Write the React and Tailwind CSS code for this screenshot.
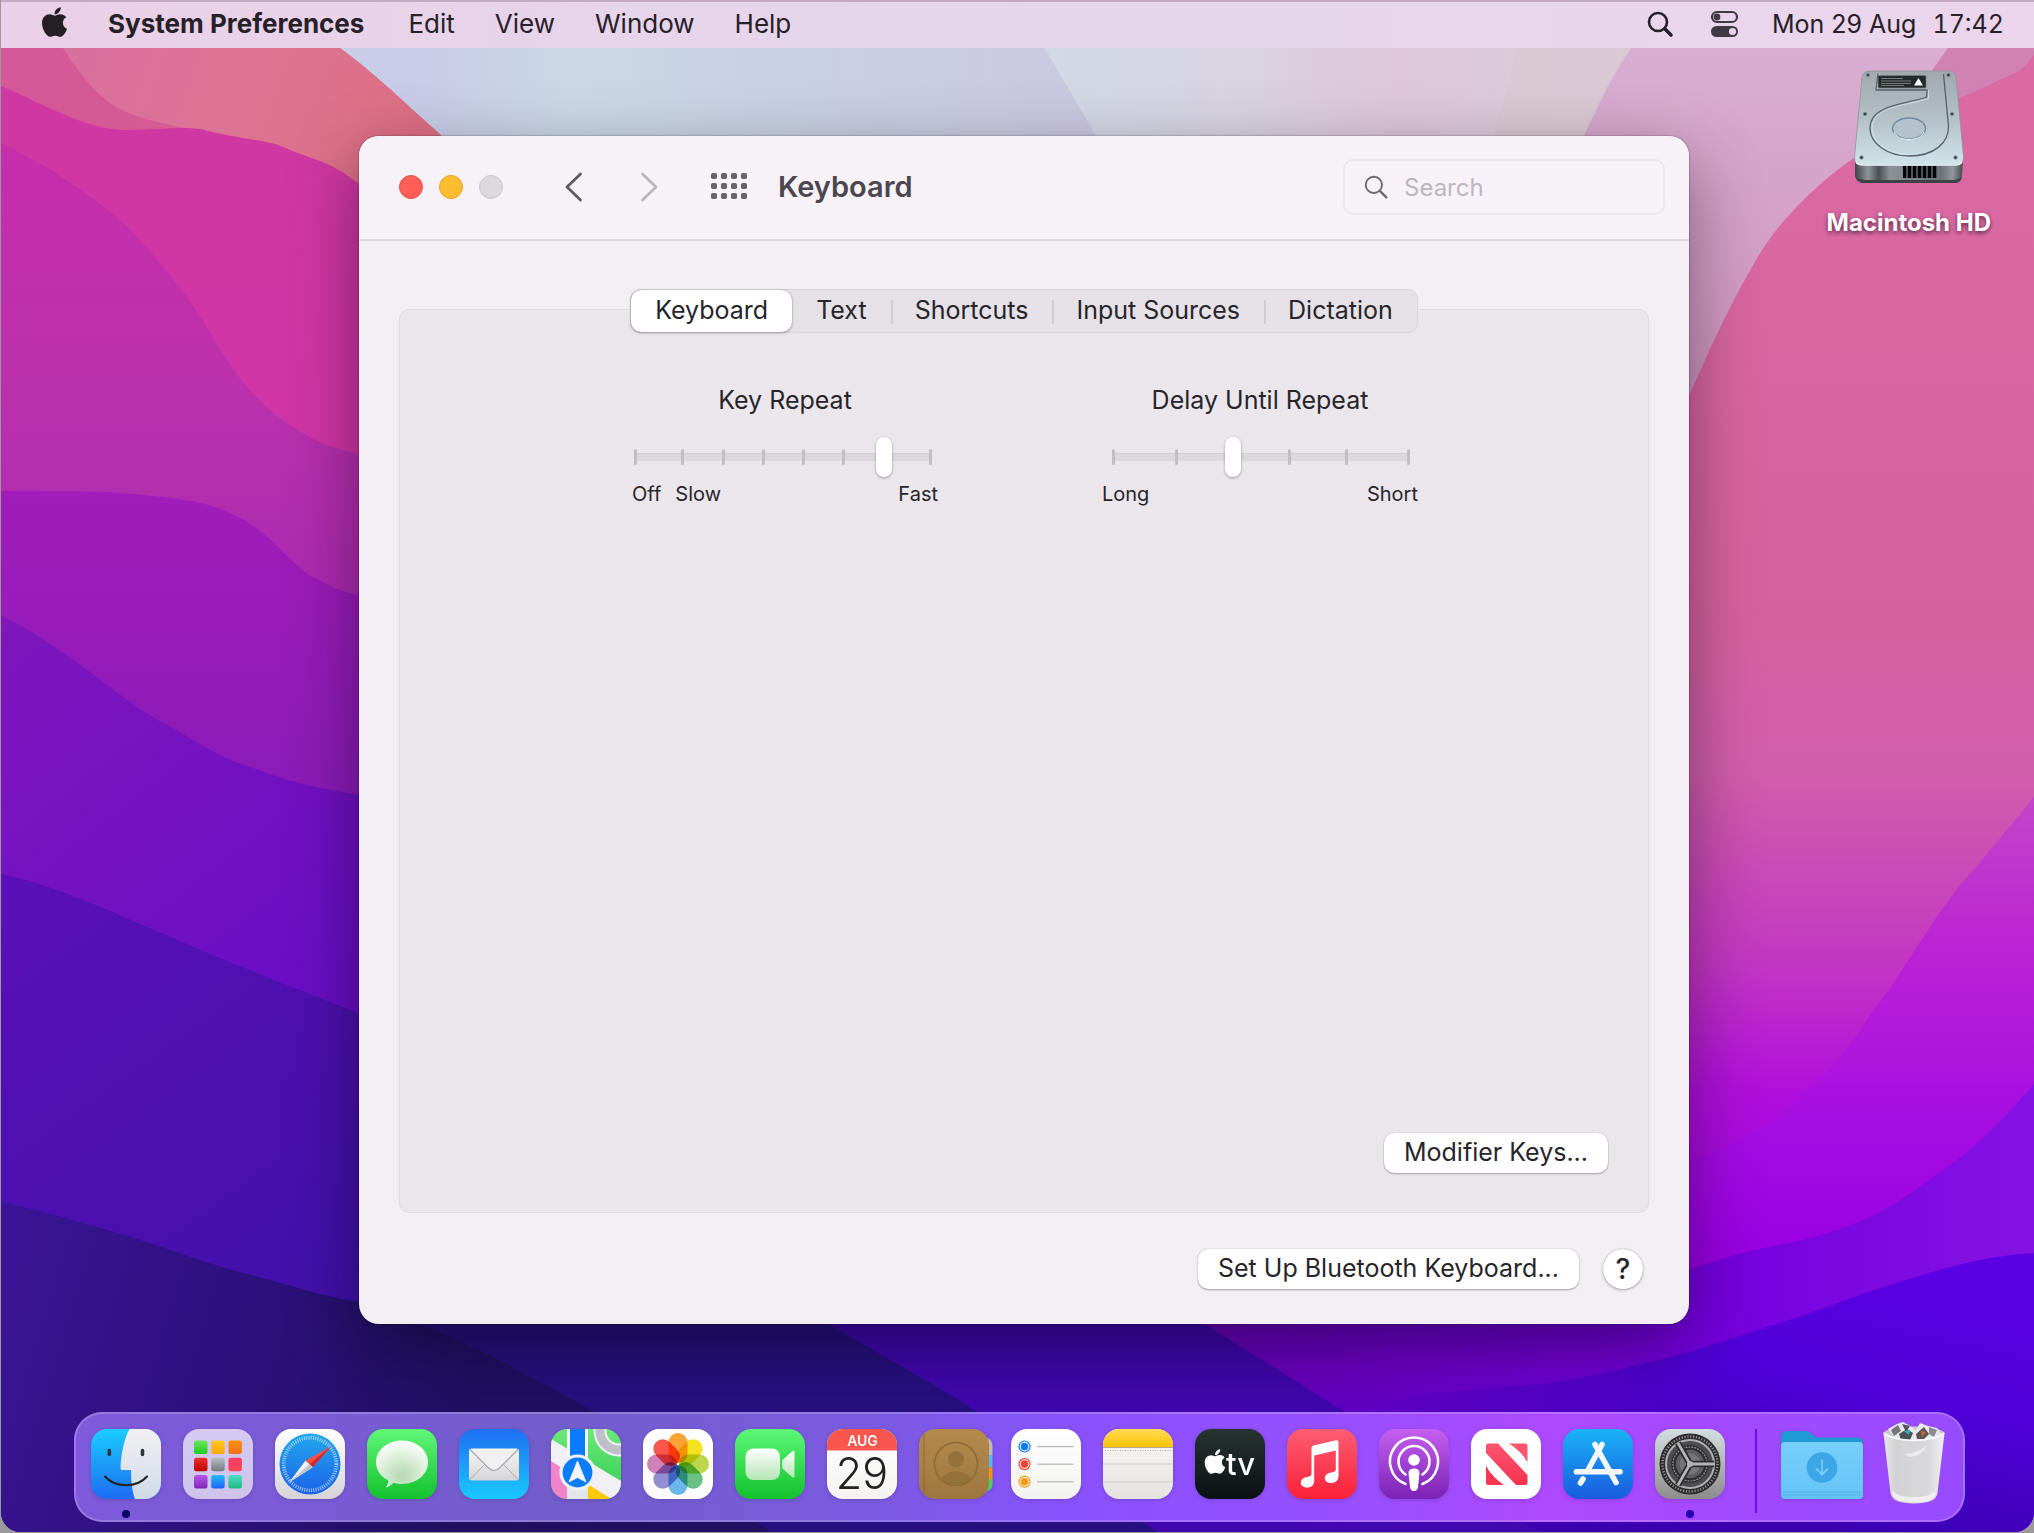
import { useState } from 'react'
import { FaApple } from 'react-icons/fa'

const TABS = ['Keyboard', 'Text', 'Shortcuts', 'Input Sources', 'Dictation']

function Gradient({ id, from, to, x2 = 0, y2 = 1 }) {
  return (
    <linearGradient id={id} x1="0" y1="0" x2={x2} y2={y2}>
      <stop offset="0" stopColor={from} />
      <stop offset="1" stopColor={to} />
    </linearGradient>
  )
}

/* ---------- Wallpaper ---------- */

function Wallpaper() {
  return (
    <svg className="absolute inset-0 h-full w-full" viewBox="0 0 2034 1533" preserveAspectRatio="none" aria-hidden="true">
      <defs>
        <linearGradient id="w-sky" x1="0" y1="0" x2="1" y2="0">
          <stop offset="0.15" stopColor="#c9cfe8" />
          <stop offset="0.2" stopColor="#c7cbe7" />
          <stop offset="0.28" stopColor="#ccd8e8" />
          <stop offset="0.4" stopColor="#c8d0e4" />
          <stop offset="0.52" stopColor="#cbc8e2" />
        </linearGradient>
        <linearGradient id="w-haze" x1="1040" y1="0" x2="1640" y2="0" gradientUnits="userSpaceOnUse">
          <stop offset="0" stopColor="#d2d9e6" />
          <stop offset="0.35" stopColor="#d9d3e1" />
          <stop offset="0.6" stopColor="#dfc6da" />
          <stop offset="0.75" stopColor="#dccada" />
          <stop offset="1" stopColor="#dccfdc" />
        </linearGradient>
        <Gradient id="w-lilac" from="#d9aed2" to="#cf93c0" />
        <Gradient id="w-coral" from="#d4579a" to="#e0657f" x2={1} y2={0} />
        <linearGradient id="w-peach" x1="60" y1="48" x2="400" y2="170" gradientUnits="userSpaceOnUse">
          <stop offset="0" stopColor="#d8709f" />
          <stop offset="0.5" stopColor="#dc7494" />
          <stop offset="1" stopColor="#dd6f84" />
        </linearGradient>
        <linearGradient id="w-l2" x1="0" y1="86" x2="0" y2="460" gradientUnits="userSpaceOnUse">
          <stop offset="0" stopColor="#cf38a2" />
          <stop offset="1" stopColor="#d135a8" />
        </linearGradient>
        <linearGradient id="w-l3" x1="0" y1="143" x2="0" y2="600" gradientUnits="userSpaceOnUse">
          <stop offset="0" stopColor="#c72eab" />
          <stop offset="0.55" stopColor="#bb31ad" />
          <stop offset="1" stopColor="#ab2ab2" />
        </linearGradient>
        <linearGradient id="w-l4" x1="0" y1="490" x2="0" y2="800" gradientUnits="userSpaceOnUse">
          <stop offset="0" stopColor="#a11cbb" />
          <stop offset="1" stopColor="#8a1bb8" />
        </linearGradient>
        <linearGradient id="w-l5" x1="0" y1="616" x2="300" y2="1000" gradientUnits="userSpaceOnUse">
          <stop offset="0" stopColor="#7f16bd" />
          <stop offset="1" stopColor="#690ec6" />
        </linearGradient>
        <linearGradient id="w-l6" x1="0" y1="880" x2="300" y2="1300" gradientUnits="userSpaceOnUse">
          <stop offset="0" stopColor="#5a10b8" />
          <stop offset="1" stopColor="#4210aa" />
        </linearGradient>
        <linearGradient id="w-l7" x1="0" y1="1250" x2="480" y2="1400" gradientUnits="userSpaceOnUse">
          <stop offset="0" stopColor="#3b1496" />
          <stop offset="0.45" stopColor="#2e117f" />
          <stop offset="1" stopColor="#1f1062" />
        </linearGradient>
        <linearGradient id="w-rose" x1="0" y1="50" x2="0" y2="1260" gradientUnits="userSpaceOnUse">
          <stop offset="0" stopColor="#da6aa4" />
          <stop offset="0.45" stopColor="#d6629f" />
          <stop offset="0.6" stopColor="#d15eab" />
          <stop offset="0.76" stopColor="#c335c4" />
          <stop offset="0.86" stopColor="#b010dc" />
          <stop offset="1" stopColor="#9a00e2" />
        </linearGradient>
        <linearGradient id="w-magenta" x1="0" y1="797" x2="0" y2="1260" gradientUnits="userSpaceOnUse">
          <stop offset="0" stopColor="#c545c8" />
          <stop offset="0.3" stopColor="#bc26d3" />
          <stop offset="0.65" stopColor="#a910e1" />
          <stop offset="1" stopColor="#9800e4" />
        </linearGradient>
        <linearGradient id="w-violet" x1="1200" y1="0" x2="2034" y2="0" gradientUnits="userSpaceOnUse">
          <stop offset="0" stopColor="#6800bc" />
          <stop offset="0.6" stopColor="#7400df" />
          <stop offset="1" stopColor="#8512e4" />
        </linearGradient>
        <linearGradient id="w-floor" x1="0" y1="1370" x2="0" y2="1533" gradientUnits="userSpaceOnUse">
          <stop offset="0" stopColor="#3a00b0" stopOpacity="0" />
          <stop offset="1" stopColor="#3a00b0" />
        </linearGradient>
        <linearGradient id="w-indigo" x1="1900" y1="1260" x2="1840" y2="1533" gradientUnits="userSpaceOnUse">
          <stop offset="0" stopColor="#5c00e4" />
          <stop offset="0.5" stopColor="#4e00d6" />
          <stop offset="1" stopColor="#3a00b0" />
        </linearGradient>
        <linearGradient id="w-fade" x1="1380" y1="0" x2="1700" y2="0" gradientUnits="userSpaceOnUse">
          <stop offset="0" stopColor="#fff" stopOpacity="0" />
          <stop offset="1" stopColor="#fff" />
        </linearGradient>
        <mask id="w-fade-mask" maskUnits="userSpaceOnUse" x="0" y="0" width="2034" height="1533">
          <rect width="2034" height="1533" fill="url(#w-fade)" />
        </mask>
      </defs>
      <rect width="2034" height="1533" fill="url(#w-sky)" />
      <path d="M1044 48C1060 75 1075 100 1095 135L1200 300H1700V48Z" fill="url(#w-haze)" />
      <path d="M1517 48C1512 75 1503 100 1493 135L1450 200H1700V48Z" fill="#d9c6cf" opacity=".6" />
      <path d="M1631 48C1612 75 1598 105 1585 133L1500 400H1800L2034 200V48Z" fill="url(#w-lilac)" />
      <path d="M1948 48L1900 115L1855 157L2034 120V48Z" fill="#d182b4" />
      <path d="M2034 55C2028 62 2024 68 2017 72C1998 81 1980 89 1962 97C1920 112 1885 132 1855 157C1830 175 1812 190 1793 211C1765 240 1755 262 1738 292C1718 330 1705 360 1689 396L1500 900V1400H2034Z" fill="url(#w-rose)" />
      <path d="M2034 797C2010 828 1985 856 1960 886C1925 930 1905 970 1875 1009C1856 1035 1845 1056 1824 1076C1795 1105 1770 1125 1738 1142L1650 1180V1320H2034Z" fill="url(#w-magenta)" />
      <path d="M2034 1085C2004 1118 1975 1150 1943 1171C1915 1190 1888 1212 1858 1223C1830 1234 1800 1242 1772 1247C1745 1252 1720 1260 1689 1270L1100 1290V1533H2034Z" fill="url(#w-violet)" />
      <rect x="1100" y="1370" width="934" height="163" fill="url(#w-floor)" />
      <path d="M2034 1254C1985 1256 1940 1270 1892 1285C1850 1298 1812 1315 1772 1326C1730 1340 1685 1355 1636 1366C1590 1378 1550 1386 1500 1388L1380 1400V1533H2034Z" fill="url(#w-indigo)" mask="url(#w-fade-mask)" />

      <path d="M0 48H339C370 70 405 104 440 135L600 400H0Z" fill="url(#w-coral)" />
      <path d="M62 48C80 75 98 100 125 112C150 122 180 128 207 131C235 140 280 140 310 160C330 166 345 175 360 185L400 240L440 135C405 104 370 70 339 48Z" fill="url(#w-peach)" />
      <path d="M0 86C45 105 85 130 125 130C160 130 190 125 207 131C235 138 262 140 280 146C310 160 330 160 359 185L700 400V700H0Z" fill="url(#w-l2)" />
      <path d="M0 143C45 165 85 190 123 224C145 245 163 268 183 293C200 315 215 345 233 370C252 397 275 418 300 432C320 445 340 450 359 455L700 700V800H0Z" fill="url(#w-l3)" />
      <path d="M0 491C50 492 100 490 150 496C180 499 207 502 233 515C252 523 268 538 283 553C295 565 305 575 320 581C333 589 345 594 359 595L900 900H0Z" fill="url(#w-l4)" />
      <path d="M0 616C30 630 55 648 83 668C113 690 140 713 173 729C200 746 228 762 257 770C290 783 325 791 359 795L900 1100H0Z" fill="url(#w-l5)" />
      <path d="M0 875C35 882 65 894 100 908C140 925 178 942 217 958C265 978 310 995 359 1015L1206 1326L1343 1412L1540 1533H0Z" fill="#4007ae" />
      <path d="M0 875C35 882 65 894 100 908C140 925 178 942 217 958C265 978 310 995 359 1015L600 1100V1324H0Z" fill="url(#w-l6)" />
      <path d="M0 1203C45 1213 90 1226 133 1239C178 1253 220 1270 267 1280C298 1290 328 1298 359 1303L600 1290L830 1326L957 1400L1157 1533H0Z" fill="#26107f" />
      <path d="M0 1203C45 1213 90 1226 133 1239C178 1253 220 1270 267 1280C298 1290 328 1298 359 1303L440 1333L500 1362L593 1412L770 1533H0Z" fill="url(#w-l7)" />
    </svg>
  )
}

/* ---------- Menu bar ---------- */

function MenuBar() {
  return (
    <header className="relative flex h-12 items-center border-t-2 border-[#c3a9c4] bg-linear-to-r from-[#ebd0e7] via-[#e4d7ec] to-[#ecd5ec] pr-[30px] pb-0.5 pl-10 leading-none whitespace-nowrap text-[#262128]">
      <nav className="flex items-center gap-10 text-[26px]">
        <button type="button" aria-label="Apple menu">
          <FaApple size={34} className="-mt-1 w-[27px] text-[#231f25]" />
        </button>
        <button type="button" className="pr-1 font-bold">System Preferences</button>
        <button type="button">Edit</button>
        <button type="button">View</button>
        <button type="button">Window</button>
        <button type="button">Help</button>
      </nav>
      <div className="ml-auto flex items-center text-[25px]">
        <button type="button" aria-label="Spotlight" className="mr-9">
          <svg width="27" height="27" viewBox="0 0 27 27" fill="none" stroke="#262128" strokeLinecap="round">
            <circle cx="11" cy="11" r="9" strokeWidth="2.6" />
            <path d="M18 18l6 6" strokeWidth="3.6" />
          </svg>
        </button>
        <button type="button" aria-label="Control Centre" className="mr-8">
          <svg width="30" height="28" viewBox="0 0 30 28">
            <rect x="2" y="2" width="25" height="10" rx="5" fill="none" stroke="#3f3942" strokeWidth="2.2" />
            <circle cx="7" cy="7" r="3.4" fill="#3f3942" />
            <rect x="1" y="16" width="27" height="11" rx="5.5" fill="#3f3942" />
            <circle cx="22.500" cy="21.500" r="3.600" fill="#ead5ec" />
          </svg>
        </button>
        <time className="flex gap-4">
          <span>Mon 29 Aug</span>
          <span className="tabular-nums">17:42</span>
        </time>
      </div>
    </header>
  )
}

/* ---------- Desktop drive ---------- */

function DriveIcon() {
  const screws = [[14, 5], [94.500, 5], [11, 44], [98, 44], [7.500, 87.500], [101.500, 87.500]]
  return (
    <svg width="110" height="114" viewBox="0 0 110 114" aria-hidden="true">
      <defs>
        <linearGradient id="hd-top" x1="0" y1="0" x2="0" y2="1">
          <stop offset="0" stopColor="#a1a9ac" />
          <stop offset="0.5" stopColor="#b3c0c6" />
          <stop offset="1" stopColor="#cfe4ea" />
        </linearGradient>
        <linearGradient id="hd-base" x1="0" y1="0" x2="1" y2="0">
          <stop offset="0" stopColor="#3e4448" />
          <stop offset="0.12" stopColor="#8d9598" />
          <stop offset="0.22" stopColor="#4a5053" />
          <stop offset="0.32" stopColor="#8b9396" />
          <stop offset="0.8" stopColor="#6a7275" />
          <stop offset="0.9" stopColor="#90989b" />
          <stop offset="1" stopColor="#454b4f" />
        </linearGradient>
      </defs>
      <path d="M1 90H109L108 106Q107 113 100 113H10Q2 113 1 106Z" fill="url(#hd-base)" />
      <path d="M2 107Q4 113 10 113H100Q107 113 108 107Q104 110 98 110H12Q6 110 2 107Z" fill="#3b4145" />
      <path d="M48.500 96H83V108H50Z" fill="#4a4f50" />
      {[49, 54, 59, 64, 69, 74, 79].map((x) => (
        <rect key={x} x={x} y="96" width="3" height="12" fill="#050607" />
      ))}
      <path d="M15 1H95Q101 1 102 8L109.500 87Q110 95 101 95H8Q0 95 .500 87L8 8Q9 1 15 1Z" fill="url(#hd-top)" stroke="#8d979b" strokeWidth=".8" />
      <path d="M2 92Q4 95 9 95H101Q106 95 108 92" fill="none" stroke="#e7f1f3" strokeWidth="1.400" />
      <path d="M24 3.500L22 20H73L72.500 27C55 34 16 34 16 58C16 74 34 86 55 86C80 86 95 73 94.500 56L89.500 4" fill="none" stroke="#56606a" strokeWidth="1.300" />
      <path d="M25.500 3.500L23.500 18.500M74.500 20V28.500C56 35 18 36 18 58C18 73 35 84.500 55 84.500" fill="none" stroke="#dfe9ee" strokeWidth=".7" />
      <rect x="24" y="5.500" width="48" height="12.500" rx="1" fill="#26292b" stroke="#767c7f" strokeWidth=".8" />
      <path d="M27 8.500H49M27 11H57M27 13.500H57M27 15.500H50" stroke="#8a8f90" strokeWidth=".8" />
      <path d="M64.500 8L69 15.500H60Z" fill="#fff" />
      <ellipse cx="55" cy="58.500" rx="16.500" ry="10.500" fill="#b4c3cb" stroke="#6f8aa0" strokeWidth="1.400" />
      <path d="M40 62C43 72 67 72 70 62" fill="none" stroke="#eef7fa" strokeWidth="1" />
      {screws.map(([cx, cy]) => (
        <circle key={`${cx}-${cy}`} cx={cx} cy={cy} r="1.800" fill="#394147" stroke="#8797a0" strokeWidth=".8" />
      ))}
    </svg>
  )
}

/* ---------- Preferences window ---------- */

function RepeatSlider({ id, title, steps, value, onChange, labels, trackClass }) {
  const last = steps - 1
  return (
    <div className="flex flex-col">
      <label htmlFor={id} className="text-center text-[25px] leading-8">{title}</label>
      <div className={`relative mt-[21px] h-10 w-[298px] ${trackClass}`}>
        <div className="absolute inset-x-0 top-4 h-2 border-t border-[#d2cdd3] bg-[#dcd7dd]" />
        {Array.from({ length: steps }, (_, i) => (
          <span
            key={i}
            className="absolute top-3 h-4 w-[3px] rounded-full bg-[#c2bdc3]"
            style={{
              left: i === 0 ? 0 : i === last ? 'calc(100% - 3px)' : `calc(7px + (100% - 16px) * ${i / last})`,
            }}
          />
        ))}
        <input
          id={id}
          type="range"
          min="0"
          max={last}
          value={value}
          onChange={(e) => onChange(Number(e.target.value))}
          className="relative block h-10 w-full appearance-none bg-transparent
                     [&::-webkit-slider-thumb]:h-10 [&::-webkit-slider-thumb]:w-4
                     [&::-webkit-slider-thumb]:appearance-none [&::-webkit-slider-thumb]:rounded-full
                     [&::-webkit-slider-thumb]:bg-white
                     [&::-webkit-slider-thumb]:shadow-[0_1px_3px_rgba(0,0,0,0.35)]"
        />
      </div>
      <div className="mt-px flex gap-3.5 text-[20px] leading-8">
        {labels.map((text) => (
          <span key={text} className="last:ml-auto">{text}</span>
        ))}
      </div>
    </div>
  )
}

function PushButton({ children }) {
  return (
    <button type="button" className="h-10 rounded-[10px] bg-white px-5 pb-0.5 text-[25px] leading-none shadow-[0_0_1px_rgba(0,0,0,0.3),0_1px_2px_rgba(0,0,0,0.3)]">
      {children}
    </button>
  )
}

function PreferencesWindow() {
  const [tab, setTab] = useState('Keyboard')
  const [repeat, setRepeat] = useState(6)
  const [delay, setDelay] = useState(2)

  return (
    <section className="mr-[345px] ml-[358px] flex flex-1 flex-col overflow-hidden rounded-[20px] bg-[#f3eef4] text-[#27252a] shadow-[0_0_2px_rgba(0,0,0,0.5),0_24px_70px_rgba(0,0,0,0.42)]">
      <div className="flex h-[105px] items-center border-b-2 border-[#dcd7de] bg-[#f7f2f8] pr-6 pb-0.5 pl-10">
        <div className="flex gap-4">
          <button type="button" aria-label="Close" className="size-6 rounded-full border border-[#e5504a] bg-[#ff5f57]" />
          <button type="button" aria-label="Minimise" className="size-6 rounded-full border border-[#e3a52a] bg-[#febc2e]" />
          <button type="button" aria-label="Zoom" disabled className="size-6 rounded-full border border-[#c9c5cb] bg-[#dcd8dd]" />
        </div>
        <button type="button" aria-label="Back" className="ml-[62px]">
          <svg width="18" height="30" viewBox="0 0 18 30" fill="none" stroke="#5f5a62" strokeWidth="2.8" strokeLinecap="round" strokeLinejoin="round">
            <path d="M15.500 2L2 15l13.500 13" />
          </svg>
        </button>
        <button type="button" aria-label="Forward" className="ml-[57px]">
          <svg width="18" height="30" viewBox="0 0 18 30" fill="none" stroke="#bbb6bd" strokeWidth="2.8" strokeLinecap="round" strokeLinejoin="round">
            <path d="M2.500 2L16 15L2.500 28" />
          </svg>
        </button>
        <button type="button" aria-label="Show all" className="ml-[53px]">
          <svg width="36" height="27" viewBox="0 0 36 27" fill="#68636b">
            {[0, 10, 20, 30].map((x) => [0, 10, 20].map((y) => (
              <rect key={`${x}-${y}`} x={x} y={y} width="6" height="6" rx="1.800" />
            )))}
          </svg>
        </button>
        <h1 className="ml-[31px] text-[29px] leading-none font-semibold text-[#4b474e]">Keyboard</h1>
        <label className="ml-auto flex h-14 w-[322px] items-center gap-4 rounded-[10px] border-2 border-[#ebe6ec] px-[19px]">
          <svg width="28" height="28" viewBox="0 0 28 28" fill="none" stroke="#6c676e" strokeLinecap="round">
            <circle cx="11.500" cy="11.500" r="9.500" strokeWidth="2.2" />
            <path d="M19 19l7 7" strokeWidth="2.8" />
          </svg>
          <input
            type="search"
            aria-label="Search"
            placeholder="Search"
            className="w-full min-w-0 bg-transparent pt-0.5 text-[24px] leading-8 outline-none placeholder:text-[#bcb7bd]"
          />
        </label>
      </div>

      <div className="flex flex-1 flex-col px-10 pt-12">
        <div role="tablist" className="relative z-10 flex h-11 self-center rounded-[10px] border border-[#dad6db] bg-[#e5e1e6]">
          {TABS.map((name, i) => (
            <button
              key={name}
              type="button"
              role="tab"
              aria-selected={tab === name}
              onClick={() => setTab(name)}
              className={`relative px-6 pb-0.5 text-[25px] leading-none ${
                tab === name ? 'rounded-[10px] bg-white shadow-[0_0_1px_rgba(0,0,0,0.4),0_1px_3px_rgba(0,0,0,0.3)]' : ''
              }`}
            >
              {name}
              {i > 1 && <span className="absolute top-2.5 left-0 h-6 w-0.5 bg-[#d0ccd1]" />}
            </button>
          ))}
        </div>

        <div className="-mt-6 flex flex-1 flex-col rounded-[10px] border border-[#e0dbe1] bg-[#ebe6ec] px-10 pt-[74px] pb-[39px]">
          <div className="flex justify-center gap-[164px] pl-0.5">
            <RepeatSlider
              id="key-repeat"
              title="Key Repeat"
              steps={8}
              value={repeat}
              onChange={setRepeat}
              labels={['Off', 'Slow', 'Fast']}
              trackClass="mr-1.5 ml-0.5"
            />
            <RepeatSlider
              id="delay-until-repeat"
              title="Delay Until Repeat"
              steps={6}
              value={delay}
              onChange={setDelay}
              labels={['Long', 'Short']}
              trackClass="mr-2 ml-2.5"
            />
          </div>
          <div className="mt-auto flex justify-end">
            <PushButton>Modifier Keys...</PushButton>
          </div>
        </div>

        <div className="mt-9 mb-[35px] flex items-center justify-end gap-6 pr-1.5">
          <PushButton>Set Up Bluetooth Keyboard...</PushButton>
          <button
            type="button"
            aria-label="Help"
            className="size-10 rounded-full bg-white text-[28px] leading-none font-medium shadow-[0_0_1px_rgba(0,0,0,0.3),0_1px_3px_rgba(0,0,0,0.3)]"
          >
            ?
          </button>
        </div>
      </div>
    </section>
  )
}

/* ---------- Dock icons ---------- */

function Tile({ id, from, to, children }) {
  return (
    <svg width="70" height="70" viewBox="0 0 70 70" className="overflow-visible drop-shadow-sm" aria-hidden="true">
      <defs>
        <Gradient id={`${id}-bg`} from={from} to={to} />
        <clipPath id={`${id}-clip`}><rect width="70" height="70" rx="16" /></clipPath>
      </defs>
      <g clipPath={`url(#${id}-clip)`}>
        <rect width="70" height="70" fill={`url(#${id}-bg)`} />
        {children}
      </g>
    </svg>
  )
}

function Finder() {
  return (
    <Tile id="finder" from="#1accff" to="#1d6df2">
      <defs><Gradient id="finder-face" from="#f2f0f3" to="#cfdbe6" /></defs>
      <path d="M38.500 0C33 10 30 25 29.500 39Q29.500 41 31 41H40C40 52 41 62 44 70H70V0Z" fill="url(#finder-face)" />
      <path d="M18.300 21.500V25.500M51.500 21.500V25.500" stroke="#2a3440" strokeWidth="3.600" strokeLinecap="round" />
      <path d="M14 47.500C24 59 46 59 56 47.500" fill="none" stroke="#222" strokeWidth="2" strokeLinecap="round" />
    </Tile>
  )
}

const LAUNCHPAD = [
  ['#6ce45a', '#1fcc22'], ['#fdc92c', '#fea500'], ['#fb9210', '#f0701c'],
  ['#f5302c', '#b90404'], ['#b4bfc4', '#76797c'], ['#fe3c62', '#fb4659'],
  ['#b856ea', '#8126b8'], ['#22bcfb', '#1f62f5'], ['#4fdcc8', '#1fba80'],
]

function Launchpad() {
  return (
    <Tile id="launchpad" from="#d5caf1" to="#cec4ea">
      {LAUNCHPAD.map(([from, to], i) => (
        <g key={from}>
          <defs><Gradient id={`lp-${i}`} from={from} to={to} /></defs>
          <rect x={11 + (i % 3) * 17.2} y={11.500 + Math.floor(i / 3) * 17.2} width="13.500" height="13.500" rx="2.500" fill={`url(#lp-${i})`} />
        </g>
      ))}
    </Tile>
  )
}

function Safari() {
  return (
    <Tile id="safari" from="#ffffff" to="#d6d4d8">
      <defs><Gradient id="safari-dial" from="#22a8ec" to="#1c62ea" /></defs>
      <circle cx="35" cy="35" r="30.500" fill="url(#safari-dial)" />
      <circle cx="35" cy="35" r="26.300" fill="none" stroke="#d8eefc" strokeWidth="3.600" strokeDasharray=".9 1.395" opacity=".8" />
      <path d="M14 53.500L30.500 31.500L38 38Z" fill="#f1f1f4" />
      <path d="M14 53.500L34.500 35L38 38Z" fill="#c2c6cf" />
      <path d="M56.500 17L30.500 31.500L38 38Z" fill="#fb5148" />
      <path d="M56.500 17L34.500 35L38 38Z" fill="#cf2c31" />
    </Tile>
  )
}

function Messages() {
  return (
    <Tile id="messages" from="#60f777" to="#12c22d">
      <defs>
        <radialGradient id="bubble" cx=".5" cy=".75" r=".75">
          <stop offset="0" stopColor="#b4d8ae" />
          <stop offset="0.55" stopColor="#dcefd9" />
          <stop offset="1" stopColor="#ffffff" />
        </radialGradient>
      </defs>
      <path d="M35 11.500C49.500 11.500 61 21 61 33.300S49.500 55 35 55C32 55 29.200 54.500 26.500 53.700C24.500 56 21.500 58 18.500 58.500C20.500 56 21.500 53.500 21.200 51.200C13.800 47.500 9 41 9 33.300C9 21 20.500 11.500 35 11.500Z" fill="url(#bubble)" />
    </Tile>
  )
}

function Mail() {
  return (
    <Tile id="mail" from="#1e6ff3" to="#1ac9fd">
      <defs><Gradient id="envelope" from="#f6f6f7" to="#d5d5d7" /></defs>
      <rect x="10" y="19.500" width="50" height="32" rx="3" fill="url(#envelope)" />
      <path d="M11 50.500L25.500 35.500M59 50.500L44.500 35.500" stroke="#aaaaae" strokeWidth="1" />
      <path d="M11 20.500L29 38.500Q35 44.500 41 38.500L59 20.500" fill="#f0f0f1" stroke="#a8a8ac" strokeWidth="1.200" />
    </Tile>
  )
}

function Maps() {
  return (
    <Tile id="maps" from="#6de87b" to="#2fcc50">
      <circle cx="68" cy="2" r="19" fill="none" stroke="#f0f0f4" strokeWidth="13" />
      <circle cx="68" cy="2" r="19" fill="none" stroke="#bfbfca" strokeWidth="9" />
      <path d="M0 31V70H16V40Z" fill="#f083c9" />
      <path d="M37 52V70H62Z" fill="#fdc90a" />
      <path d="M0 10L70 52V76L0 32Z" fill="#f1f1f5" />
      <path d="M16 38H37V70H16Z" fill="#e4e4ec" />
      <path d="M16 0H37V42H16Z" fill="#f3f6fb" />
      <path d="M19 0H34V42H19Z" fill="#0a7bfc" />
      <circle cx="26.500" cy="43.500" r="16.500" fill="#0b7cfb" stroke="#f0f0f4" strokeWidth="3.200" />
      <path d="M26.500 32L35 53L26.500 48.500L18 53Z" fill="#f5f5f8" strokeLinejoin="round" stroke="#f5f5f8" strokeWidth=".8" />
    </Tile>
  )
}

const PETALS = ['#fd9d20', '#f5e208', '#b7d63e', '#5dbf7d', '#5eb2ec', '#8d85cf', '#d077b4', '#fb4a3c']

function Photos() {
  return (
    <Tile id="photos" from="#ffffff" to="#fbfbfc">
      {PETALS.map((fill, i) => (
        <rect key={fill} x="25.500" y="4" width="19" height="30" rx="9.500" fill={fill} opacity=".92" className="mix-blend-multiply" transform={`rotate(${i * 45} 35 35)`} />
      ))}
    </Tile>
  )
}

function FaceTime() {
  return (
    <Tile id="facetime" from="#5cf777" to="#12c22d">
      <defs><Gradient id="camera" from="#ffffff" to="#b4e5b4" /></defs>
      <rect x="10.500" y="19.500" width="34.500" height="31.500" rx="8" fill="url(#camera)" />
      <path d="M47.500 31L57 22.500Q59.500 20.500 59.500 23.500V47Q59.500 50 57 48L47.500 39.500Q46.500 35 47.500 31Z" fill="url(#camera)" />
    </Tile>
  )
}

function Calendar() {
  return (
    <Tile id="calendar" from="#ffffff" to="#f4f3f2">
      <path d="M0 0H70V21.500H0Z" fill="#f9564e" />
      <text x="35.500" y="17" textAnchor="middle" fontSize="14" fontWeight="600" fill="#fff">AUG</text>
      <text x="35" y="59.500" textAnchor="middle" fontSize="43" fontWeight="300" fill="#222">29</text>
    </Tile>
  )
}

function Contacts() {
  return (
    <svg width="74" height="70" viewBox="0 0 74 70" className="-mr-1 drop-shadow-sm" aria-hidden="true">
      <defs><Gradient id="cover" from="#b48a4c" to="#9e7640" /></defs>
      <path d="M64 9H68Q73.500 11 73.500 17V26H64Z" fill="#bdb9b4" />
      <path d="M64 26H73.500V38.500H64Z" fill="#55b8ee" />
      <path d="M64 38.500H73.500V50H64Z" fill="#f88f0f" />
      <path d="M64 50H73.500V56Q73 61 68 62H64Z" fill="#4cce62" />
      <rect width="70" height="70" rx="16" fill="url(#cover)" />
      <path d="M5 5V65" stroke="#8d6a36" strokeWidth="1" />
      <circle cx="37" cy="35" r="21.500" fill="none" stroke="#8c6936" strokeWidth="1.500" />
      <circle cx="37" cy="30" r="8" fill="#94703a" />
      <path d="M22.500 50C26 40 48 40 51.500 50C44 58.500 30 58.500 22.500 50Z" fill="#94703a" />
    </svg>
  )
}

function Reminders() {
  return (
    <Tile id="reminders" from="#ffffff" to="#f3f3f2">
      {['#0b7bfa', '#f5413a', '#f7950c'].map((fill, i) => (
        <g key={fill}>
          <circle cx="13.500" cy={17.500 + i * 17.600} r="5.500" fill="none" stroke={fill} strokeWidth="1.200" />
          <circle cx="13.500" cy={17.500 + i * 17.600} r="3.800" fill={fill} />
          <rect x="26" y={17 + i * 17.600} width="36.500" height="1.200" fill="#b5b5b6" />
        </g>
      ))}
    </Tile>
  )
}

function Notes() {
  return (
    <Tile id="notes" from="#f9f8f6" to="#e5e3df">
      <defs><Gradient id="notes-top" from="#ffdb55" to="#ffc403" /></defs>
      <rect width="70" height="18" fill="url(#notes-top)" />
      <path d="M0 18.500H70" stroke="#b3a88d" strokeWidth="1" />
      <path d="M2 21.500H70" stroke="#b5b3b0" strokeWidth="1" strokeDasharray="1 1.500" />
      <path d="M0 35H70M0 53H70" stroke="#cfcdca" strokeWidth="1" />
    </Tile>
  )
}

function Tv() {
  return (
    <Tile id="tv" from="#273431" to="#0b1012">
      <FaApple x="6" y="18.500" size={28} color="#fff" />
      <text x="31" y="46" fontSize="31" fontWeight="500" fill="#fff">tv</text>
    </Tile>
  )
}

function Music() {
  return (
    <Tile id="music" from="#fc5d74" to="#fb2138">
      <path d="M24.500 19Q24.500 17 26.500 16.500L49 11.300Q51.500 11 51.500 13V47C51.500 51 49 54 44 54C35.500 54 36 44 44.500 43.500C47.500 43 48.800 42 48.800 40V21.500L27.200 26.500V51.500C27.200 56 24.500 58.500 20 58.500C11.500 58.500 12 49 20 48C23.500 47.500 24.500 46.500 24.500 44Z" fill="#fff" />
    </Tile>
  )
}

function Podcasts() {
  return (
    <Tile id="podcasts" from="#c55ff0" to="#7a22b4">
      <g fill="none" stroke="#fff" strokeWidth="2.600" strokeLinecap="round">
        <path d="M26.500 55A24 24 0 1 1 43.500 55" />
        <path d="M26.500 45.500A15.500 15.500 0 1 1 43.500 45.500" />
      </g>
      <circle cx="35" cy="31" r="5.800" fill="#fff" />
      <path d="M29.500 44Q29.500 39.500 35 39.500T40.500 44L39 58Q38.500 62 35 62T31 58Z" fill="#fff" />
    </Tile>
  )
}

function News() {
  return (
    <Tile id="news" from="#ffffff" to="#ffffff">
      <defs><Gradient id="news-n" from="#fc5570" to="#f8324f" /></defs>
      <path d="M15 17Q15 14.500 17.500 14.500H27L56.500 46V53.500Q56.500 56 54 56H45L15 24Z" fill="url(#news-n)" />
      <path d="M38 14.500H54Q56.500 14.500 56.500 17V33Q50 22 38 14.500Z" fill="#fb5570" />
      <path d="M33 56H17.500Q15 56 15 53.500V37Q22 49 33 56Z" fill="#f8354f" />
    </Tile>
  )
}

function AppStore() {
  return (
    <Tile id="appstore" from="#19b3f6" to="#1a5be0">
      <g fill="none" stroke="#f5f7fd" strokeWidth="5.600" strokeLinecap="round">
        <path d="M39 15.500L25.500 40" />
        <path d="M13.500 42.800H57" />
        <path d="M20 50L17.500 54" />
        <path d="M32 15.500L53 53.500" />
      </g>
    </Tile>
  )
}

function Settings() {
  return (
    <Tile id="settings" from="#d3dee1" to="#8e8c8b">
      <circle cx="35" cy="35" r="30.500" fill="#2c2c2e" />
      <circle cx="35" cy="35" r="27.500" fill="none" stroke="#9b9b9c" strokeWidth="2.400" strokeDasharray="1.100 1.780" />
      <circle cx="35" cy="35" r="24" fill="#4d4d4f" stroke="#b1b1b2" strokeWidth="2" />
      <circle cx="35" cy="35" r="16.500" fill="#5f5f61" stroke="#2d2d2f" strokeWidth="4.500" />
      <circle cx="35" cy="35" r="17" fill="none" stroke="#929293" strokeWidth="1.200" strokeDasharray="2 1" />
      <circle cx="35" cy="35" r="10.500" fill="#767678" />
      <path d="M35 35H59M35 35L23 14M35 35L23 56" stroke="#2b2b2d" strokeWidth="6.500" />
      <path d="M35 35H59M35 35L23 14M35 35L23 56" stroke="#b5b5b6" strokeWidth="2.800" />
      <circle cx="35" cy="35" r="3" fill="#b5b5b6" />
    </Tile>
  )
}

function Downloads() {
  return (
    <svg width="82" height="70" viewBox="0 0 82 70" className="drop-shadow-sm" aria-hidden="true">
      <defs><Gradient id="folder" from="#77cffc" to="#64c3f6" /></defs>
      <path d="M0 8Q0 2 6 2H24Q28 2 31 5L33.500 7.500Q35 8.500 38 8.500H76Q82 8.500 82 14V30H0Z" fill="#1f98d4" />
      <path d="M0 17Q0 13 4 13H78Q82 13 82 17V66Q82 70 78 70H4Q0 70 0 66Z" fill="url(#folder)" />
      <path d="M1 63H81M1 66H81" stroke="#53aede" strokeWidth=".8" />
      <circle cx="41" cy="38.500" r="15.300" fill="#3ba7e6" />
      <path d="M41 31V45M35.500 40L41 45.500L46.500 40" fill="none" stroke="#76cefb" strokeWidth="1.800" strokeLinecap="round" strokeLinejoin="round" />
    </svg>
  )
}

function Trash() {
  return (
    <svg width="62" height="70" viewBox="0 0 62 70" className="overflow-visible" aria-hidden="true">
      <defs>
        <linearGradient id="bin" x1="0" y1="0" x2="1" y2="0">
          <stop offset="0" stopColor="#e9e8ec" />
          <stop offset="0.2" stopColor="#d2d1d3" />
          <stop offset="0.75" stopColor="#d9d8da" />
          <stop offset="1" stopColor="#f1f0f3" />
        </linearGradient>
      </defs>
      <ellipse cx="31" cy="4" rx="30" ry="6.500" fill="#c9c7ce" />
      <path d="M5 0L14 -5L20 -7L27 -3L33 1L37 -6L45 -3L54 -1L58 5L48 11H14Z" fill="#e8e8ea" />
      <path d="M8 1L15 -4L18 2L11 7Z" fill="#76777c" />
      <path d="M19 -5L27 -3L23 3Z" fill="#54565b" />
      <path d="M16 5L24 0L30 4L27 11H18Z" fill="#4c5158" />
      <path d="M21 2L27 1L26 6Z" fill="#2cb6c7" />
      <path d="M33 5L41 -2L46 5L41 10H34Z" fill="#5e5553" />
      <path d="M38 2L43 3L39 8Z" fill="#c46a3c" />
      <path d="M46 -2L54 1L51 8L46 5Z" fill="#8b8a91" />
      <path d="M.500 4Q10 11 31 11.500Q52 11 61.500 4L54.500 64Q53 74.500 31 74.500T7.500 64Z" fill="url(#bin)" />
      <path d="M.500 4Q10 11 31 11.500Q52 11 61.500 4" fill="none" stroke="#f9f9fb" strokeWidth="1.600" />
      <path d="M22 25Q35 24 44 16Q40 27 26 28Z" fill="#ebeaec" />
      <path d="M9 60Q12 68 31 68T53 60L52 67Q48 73.500 31 73.500T10 67Z" fill="#f2f2f4" opacity=".9" />
    </svg>
  )
}

const APPS = [
  { name: 'Finder', Icon: Finder, dot: 'bg-[#0a0068]' },
  { name: 'Launchpad', Icon: Launchpad },
  { name: 'Safari', Icon: Safari },
  { name: 'Messages', Icon: Messages },
  { name: 'Mail', Icon: Mail },
  { name: 'Maps', Icon: Maps },
  { name: 'Photos', Icon: Photos },
  { name: 'FaceTime', Icon: FaceTime },
  { name: 'Calendar', Icon: Calendar },
  { name: 'Contacts', Icon: Contacts },
  { name: 'Reminders', Icon: Reminders },
  { name: 'Notes', Icon: Notes },
  { name: 'TV', Icon: Tv },
  { name: 'Music', Icon: Music },
  { name: 'Podcasts', Icon: Podcasts },
  { name: 'News', Icon: News },
  { name: 'App Store', Icon: AppStore },
  { name: 'System Preferences', Icon: Settings, dot: 'bg-[#2400b4]' },
]

function Dock() {
  return (
    <div className="mt-[88px] mb-2.5 flex justify-center pl-1">
      <nav
        aria-label="Dock"
        className="flex h-[110px] items-start rounded-[28px] border-2 border-white/20 pt-[15px] pr-[18px] pl-[15px]
                   bg-[linear-gradient(90deg,#7d5bdb_0%,#7a5bd6_12%,#725dcb_25%,#7a5be0_42%,#8852fc_52%,#9450ff_65%,#ac49ff_78%,#a24aff_88%,#974bff_100%)]"
      >
        <div className="flex gap-[22px]">
          {APPS.map(({ name, Icon, dot }) => (
            <button key={name} type="button" aria-label={name} className="relative">
              <Icon />
              {dot && <span className={`absolute top-[81px] left-1/2 -ml-1 size-2 rounded-full ${dot}`} />}
            </button>
          ))}
        </div>
        <div className="mr-6 ml-[30px] h-[84px] w-0.5 bg-[#6a0cf5]" />
        <div className="flex gap-5">
          <button type="button" aria-label="Downloads"><Downloads /></button>
          <button type="button" aria-label="Trash"><Trash /></button>
        </div>
      </nav>
    </div>
  )
}

export default function App() {
  return (
    <div className="min-h-screen bg-[#9c999d] pb-px pl-px font-['Inter','Liberation_Sans',sans-serif]">
      <main className="relative flex min-h-[calc(100vh-1px)] flex-col overflow-hidden rounded-b-[20px]">
        <Wallpaper />
        <MenuBar />
        <a href="#macintosh-hd" className="absolute top-[70px] right-[43px] flex flex-col items-center gap-6 text-[24px] leading-[30px] font-bold text-white [text-shadow:0_2px_4px_rgba(0,0,0,0.6)]">
          <DriveIcon />
          Macintosh HD
        </a>
        <div className="relative flex flex-1 flex-col pt-[88px]">
          <PreferencesWindow />
          <Dock />
        </div>
      </main>
    </div>
  )
}
